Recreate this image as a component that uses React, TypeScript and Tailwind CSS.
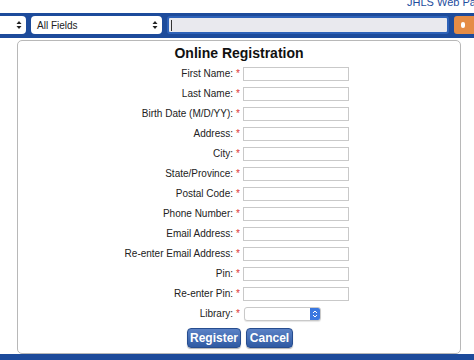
import React from "react";

const fields = [
  "First Name:",
  "Last Name:",
  "Birth Date (M/D/YY):",
  "Address:",
  "City:",
  "State/Province:",
  "Postal Code:",
  "Phone Number:",
  "Email Address:",
  "Re-enter Email Address:",
  "Pin:",
  "Re-enter Pin:",
];

function Arrows({ className = "" }: { className?: string }) {
  return (
    <svg width="6" height="10" viewBox="0 0 6 10" className={className}>
      <path d="M0.5 4 L3 1 L5.5 4 Z" fill="#222" />
      <path d="M0.5 6 L3 9 L5.5 6 Z" fill="#222" />
    </svg>
  );
}

export default function App() {
  return (
    <div className="w-[474px] h-[360px] overflow-hidden bg-white font-['Liberation_Sans',Arial,sans-serif] flex flex-col">
      <div className="h-[13px] overflow-hidden pl-[407px] whitespace-nowrap">
        <div className="-mt-[5px] text-[11px] leading-[14px] text-[#1f4e9e]">JHLS Web Page</div>
      </div>
      <div className="h-[26px] bg-[#1d4b9b] flex items-center gap-[5px] overflow-hidden">
        <div className="h-[18px] w-[30px] -ml-[4px] shrink-0 bg-white rounded-[4px] flex items-center justify-end pr-[4px]">
          <Arrows />
        </div>
        <div className="h-[18px] w-[131px] shrink-0 bg-white rounded-[4px] flex items-center justify-between pl-[6px] pr-[4px] text-[10px] text-[#222]">
          <span>All Fields</span>
          <Arrows />
        </div>
        <div className="h-[18px] w-[282px] shrink-0 bg-[#e9e9ee] border-2 border-[#2e62b8] rounded-[3px] flex items-center pl-[2px]">
          <div className="w-px h-[11px] bg-[#333]" />
        </div>
        <div className="h-[18px] w-[30px] shrink-0 bg-[#e58c45] rounded-[3px] flex items-center pl-[7px]">
          <div className="w-[4px] h-[6px] bg-white rounded-sm" />
        </div>
      </div>
      <div className="flex-1 pt-[2px] pl-[17px]">
        <div className="w-[444px] h-[314px] border border-[#b8b8b8] rounded-[5px] flex flex-col">
          <div className="text-center text-[14px] font-bold text-[#111] leading-[18px] mt-[3px]">
            Online Registration
          </div>
          <div className="flex flex-col mt-[4px] gap-[5px]">
            {fields.map((f) => (
              <div key={f} className="flex items-center h-[15px]">
                <div className="w-[215px] text-right text-[10px] text-[#222] leading-[15px]">{f}</div>
                <div className="w-[10px] pl-[3px] text-[10px] text-[#d33] leading-[15px]">*</div>
                <div className="w-[106px] h-[14px] border border-[#c9c9c9] bg-white" />
              </div>
            ))}
            <div className="flex items-center h-[15px]">
              <div className="w-[215px] text-right text-[10px] text-[#222] leading-[15px]">Library:</div>
              <div className="w-[10px] pl-[3px] text-[10px] text-[#d33] leading-[15px]">*</div>
              <div className="ml-[1px] w-[77px] h-[14px] border border-[#c9c9c9] rounded-[3px] bg-white flex justify-end shadow-[0_1px_1px_rgba(0,0,0,0.1)]">
                <div className="w-[10px] h-full bg-[#3b78e0] rounded-r-[2px] flex items-center justify-center">
                  <svg width="6" height="10" viewBox="0 0 6 10">
                    <path d="M1 4 L3 2 L5 4" stroke="white" strokeWidth="1" fill="none" />
                    <path d="M1 6 L3 8 L5 6" stroke="white" strokeWidth="1" fill="none" />
                  </svg>
                </div>
              </div>
            </div>
          </div>
          <div className="flex justify-center gap-[5px] mt-[7px] pl-[2px]">
            <button className="w-[54px] h-[20px] rounded-[4px] border border-[#274d8f] bg-gradient-to-b from-[#5b82c6] to-[#2f5aa3] text-white text-[12px] font-bold leading-none shadow-[0_1px_1px_rgba(0,0,0,0.3)]">
              Register
            </button>
            <button className="w-[47px] h-[20px] rounded-[4px] border border-[#274d8f] bg-gradient-to-b from-[#5b82c6] to-[#2f5aa3] text-white text-[12px] font-bold leading-none shadow-[0_1px_1px_rgba(0,0,0,0.3)]">
              Cancel
            </button>
          </div>
        </div>
      </div>
      <div className="h-[6px] bg-[#1d4b9b]" />
    </div>
  );
}
